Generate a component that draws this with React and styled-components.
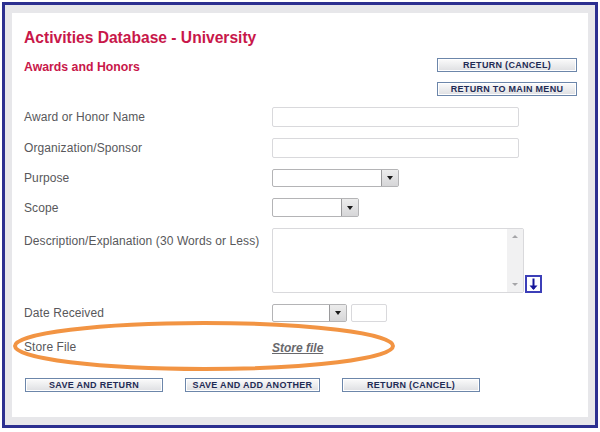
import React from 'react';
import styled, { createGlobalStyle } from 'styled-components';

const GlobalStyle = createGlobalStyle`
  html, body {
    margin: 0;
    padding: 0;
    background: #ffffff;
  }
  body {
    font-family: "Liberation Sans", Arial, sans-serif;
  }
`;

const Frame = styled.div`
  box-sizing: border-box;
  margin: 2px 0 0 2px;
  width: 596px;
  height: 426px;
  border: 3px solid #2c3090;
  background: #e7e7ea;
  padding: 8px 7px 8px 7px;
`;

const Panel = styled.div`
  position: relative;
  box-sizing: border-box;
  height: 100%;
  background: #ffffff;
  padding: 16px 11px 0 12px;
`;

const Title = styled.h1`
  margin: 0;
  font-size: 15.6px;
  line-height: 18px;
  font-weight: 700;
  color: #c8174a;
`;

const HeaderRow = styled.div`
  display: flex;
  justify-content: space-between;
  align-items: flex-start;
  margin-top: 11px;
`;

const Subtitle = styled.h2`
  margin: 2px 0 0 0;
  font-size: 12.3px;
  line-height: 14px;
  font-weight: 700;
  color: #c8174a;
`;

const ButtonStack = styled.div`
  display: flex;
  flex-direction: column;
  gap: 10px;
`;

const Button = styled.button`
  box-sizing: border-box;
  width: ${(p) => p.$w || 140}px;
  height: 14px;
  padding: 0;
  border: 1px solid #6c86aa;
  box-shadow: inset 0 0 0 1px #ffffff;
  background: linear-gradient(#fbfbfb, #dedfe2);
  font-family: "Liberation Sans", Arial, sans-serif;
  font-size: 9px;
  line-height: 12px;
  font-weight: 700;
  letter-spacing: 0.3px;
  color: #1f2b55;
  text-align: center;
`;

const Form = styled.div`
  display: flex;
  flex-direction: column;
  gap: 11px;
  margin-top: 11px;
`;

const Row = styled.div`
  display: grid;
  grid-template-columns: 248px auto;
  align-items: ${(p) => (p.$top ? 'start' : 'center')};
  min-height: ${(p) => p.$h || 0}px;
`;

const Label = styled.div`
  font-size: 12px;
  line-height: 14px;
  letter-spacing: 0.1px;
  color: #58585b;
  padding-top: ${(p) => p.$pt || 0}px;
`;

const TextInput = styled.div`
  box-sizing: border-box;
  width: ${(p) => p.$w}px;
  height: ${(p) => p.$h || 20}px;
  border: 1px solid #d9d9dc;
  border-radius: 2px;
  background: #ffffff;
`;

const Select = styled.div`
  box-sizing: border-box;
  width: ${(p) => p.$w}px;
  height: ${(p) => p.$h || 18}px;
  display: flex;
  justify-content: flex-end;
  border: 1px solid #b4b4b6;
  border-radius: 2px;
  background: #ffffff;
`;

const SelectButton = styled.div`
  box-sizing: border-box;
  width: 17px;
  height: 100%;
  display: flex;
  align-items: center;
  justify-content: center;
  border-left: 1px solid #9a9a9c;
  background: linear-gradient(#ececec, #d6d6d8);
  &::after {
    content: '';
    border-left: 3px solid transparent;
    border-right: 3px solid transparent;
    border-top: 4px solid #1a1a1a;
  }
`;

const FieldGroup = styled.div`
  display: flex;
  align-items: ${(p) => (p.$end ? 'flex-end' : 'center')};
  gap: ${(p) => p.$gap || 0}px;
`;

const TextArea = styled.div`
  box-sizing: border-box;
  width: 252px;
  height: 65px;
  display: flex;
  justify-content: flex-end;
  border: 1px solid #d9d9dc;
  border-radius: 2px;
  background: #ffffff;
`;

const ScrollTrack = styled.div`
  width: 16px;
  display: flex;
  flex-direction: column;
  justify-content: space-between;
  align-items: center;
  padding: 6px 0;
  background: #f1f1f2;
`;

const ScrollArrow = styled.span`
  width: 0;
  height: 0;
  border-left: 3px solid transparent;
  border-right: 3px solid transparent;
  ${(p) => (p.$up ? 'border-bottom: 3px solid #a5a5a8;' : 'border-top: 3px solid #a5a5a8;')}
`;

const ExpandIcon = styled.div`
  box-sizing: border-box;
  width: 17px;
  height: 18px;
  border: 2px solid #3c3fb8;
  background: #ffffff;
  display: flex;
  align-items: center;
  justify-content: center;
`;

const FileLink = styled.a`
  font-size: 12px;
  line-height: 14px;
  font-weight: 700;
  font-style: italic;
  color: #68686c;
  text-decoration: underline;
`;

const Footer = styled.div`
  display: flex;
  gap: 22px;
  margin-top: 17px;
  padding-left: 1px;
`;

const Highlight = styled.svg`
  position: absolute;
  left: 0;
  top: 303px;
  pointer-events: none;
`;

function App() {
  return (
    <>
      <GlobalStyle />
      <Frame>
        <Panel>
          <Title>Activities Database - University</Title>
          <HeaderRow>
            <Subtitle>Awards and Honors</Subtitle>
            <ButtonStack>
              <Button>RETURN (CANCEL)</Button>
              <Button>RETURN TO MAIN MENU</Button>
            </ButtonStack>
          </HeaderRow>

          <Form>
            <Row>
              <Label>Award or Honor Name</Label>
              <TextInput $w={247} />
            </Row>
            <Row>
              <Label>Organization/Sponsor</Label>
              <TextInput $w={247} />
            </Row>
            <Row>
              <Label>Purpose</Label>
              <Select $w={127}>
                <SelectButton />
              </Select>
            </Row>
            <Row>
              <Label>Scope</Label>
              <Select $w={87} $h={19}>
                <SelectButton />
              </Select>
            </Row>
            <Row $top>
              <Label $pt={6}>Description/Explanation (30 Words or Less)</Label>
              <FieldGroup $end $gap={1}>
                <TextArea>
                  <ScrollTrack>
                    <ScrollArrow $up />
                    <ScrollArrow />
                  </ScrollTrack>
                </TextArea>
                <ExpandIcon>
                  <svg width="11" height="13" viewBox="0 0 11 13">
                    <path d="M5.5 0.5 V11" stroke="#16169a" strokeWidth="2" fill="none" />
                    <path d="M1.5 7.5 L5.5 12 L9.5 7.5 Z" fill="#16169a" />
                  </svg>
                </ExpandIcon>
              </FieldGroup>
            </Row>
            <Row>
              <Label>Date Received</Label>
              <FieldGroup $gap={4}>
                <Select $w={75}>
                  <SelectButton />
                </Select>
                <TextInput $w={36} $h={18} />
              </FieldGroup>
            </Row>
            <Row $h={28}>
              <Label>Store File</Label>
              <div>
                <FileLink>Store file</FileLink>
              </div>
            </Row>
          </Form>

          <Footer>
            <Button $w={138}>SAVE AND RETURN</Button>
            <Button $w={135}>SAVE AND ADD ANOTHER</Button>
            <Button $w={138}>RETURN (CANCEL)</Button>
          </Footer>

          <Highlight width="400" height="80" viewBox="0 0 400 80">
            <ellipse cx="192" cy="30" rx="189" ry="23" fill="none" stroke="#f29443" strokeWidth="4" />
          </Highlight>
        </Panel>
      </Frame>
    </>
  );
}

export default App;
